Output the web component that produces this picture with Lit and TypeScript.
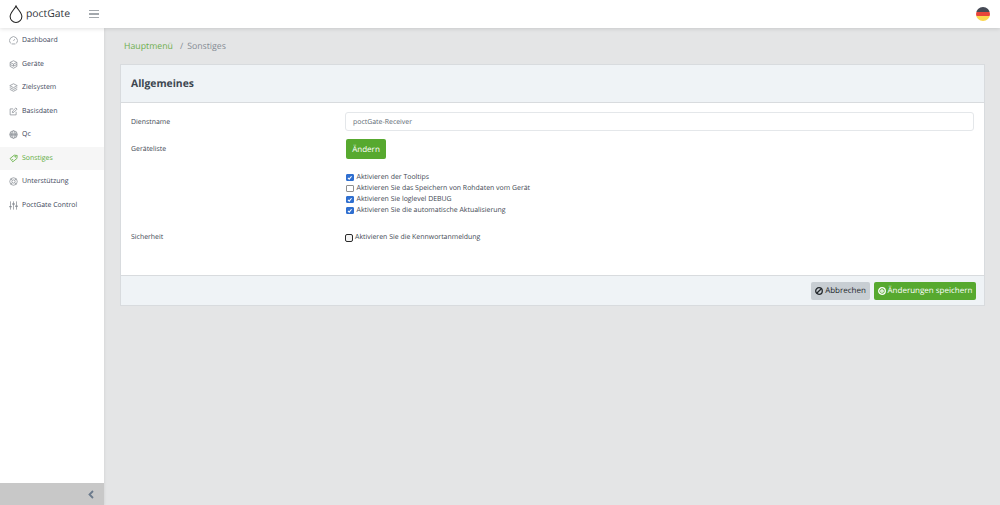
import { LitElement, html, css, svg } from "lit";
import { customElement } from "lit/decorators.js";

const icons: Record<string, any> = {
  dash: svg`<path d="M2.2 9.9A5.3 5.3 0 1 1 9.8 9.9"/><path d="M6 6.5 7.6 4.2"/><path d="M3.5 10.6h5"/>`,
  dev: svg`<path d="M6 1 10.5 3.2 10.5 8.5 6 11 1.5 8.5 1.5 3.2Z"/><path d="M1.5 3.2 6 5.5 10.5 3.2M1.5 6 6 8.2 10.5 6M6 5.5V8.2"/>`,
  layers: svg`<path d="M6 1 11 3.6 6 6.2 1 3.6Z"/><path d="M1 6 6 8.6 11 6"/><path d="M1 8.4 6 11 11 8.4"/>`,
  edit: svg`<path d="M9.5 6.5V10.5H1.5V2.5H5.5"/><path d="M4.5 7.5 5 5.3 9.2 1.2 10.8 2.8 6.6 7Z"/>`,
  globe: svg`<circle cx="6" cy="6" r="5"/><path d="M1.2 4.3h9.6M1.2 7.7h9.6M1 6h10"/><ellipse cx="6" cy="6" rx="2.3" ry="5"/>`,
  tag: svg`<path d="M1.5 6.5 6.5 1.5H10.5V5.5L5.5 10.5Z" transform="rotate(6 6 6)"/><circle cx="8.4" cy="3.6" r=".7"/><path d="M4 6.5 5.5 8"/>`,
  support: svg`<circle cx="6" cy="6" r="5"/><circle cx="6" cy="6" r="2.2"/><path d="M2.5 2.5 4.4 4.4M9.5 2.5 7.6 4.4M2.5 9.5 4.4 7.6M9.5 9.5 7.6 7.6"/>`,
  sliders: svg`<path d="M2 .5v11M6 .5v11M10 .5v11"/><path stroke-width="1.8" d="M.4 7.5h3.2M4.4 4h3.2M8.4 7h3.2"/>`,
};

const nav = [
  ["dash", "Dashboard"],
  ["dev", "Geräte"],
  ["layers", "Zielsystem"],
  ["edit", "Basisdaten"],
  ["globe", "Qc"],
  ["tag", "Sonstiges"],
  ["support", "Unterstützung"],
  ["sliders", "PoctGate Control"],
];

const checks: [string, boolean][] = [
  ["Aktivieren der Tooltips", true],
  ["Aktivieren Sie das Speichern von Rohdaten vom Gerät", false],
  ["Aktivieren Sie loglevel DEBUG", true],
  ["Aktivieren Sie die automatische Aktualisierung", true],
];

@customElement("app-root")
export class AppRoot extends LitElement {
  static styles = css`
    :host { display: block; height: 505px; overflow: hidden; font-family: "Open Sans", "Noto Sans", sans-serif; text-rendering: geometricPrecision; font-size: 6.95px; color: #3c4650; background: #e4e5e6; }
    .shell { height: 505px; display: flex; flex-direction: column; }
    header { height: 28px; flex: none; background: #fff; display: flex; align-items: center; box-shadow: 0 1px 4px rgba(0,0,0,.12); position: relative; z-index: 2; }
    .logo { width: 14px; height: 18px; margin: 0 0 0 9px; }
    .brand { font-size: 10.4px; color: #2f3338; margin-left: 3px; width: 63px; }
    .burger { width: 10px; display: flex; flex-direction: column; gap: 2px; }
    .burger i { display: block; height: 1.4px; background: #a3a8ad; }
    .flag { margin-left: auto; margin-right: 10px; width: 14px; height: 14px; border-radius: 50%; overflow: hidden; display: flex; flex-direction: column; }
    .flag i { flex: 1; display: block; }
    .main { flex: 1; display: flex; min-height: 0; }
    aside { width: 104px; flex: none; background: #fff; display: flex; flex-direction: column; box-shadow: 1px 0 2px rgba(0,0,0,.06); }
    .items { flex: 1; padding-top: 1px; }
    .item { height: 23.5px; display: flex; align-items: center; gap: 4px; padding-left: 9px; color: #3a3f58; font-size: 6.95px; }
    .item svg { width: 9px; height: 9px; fill: none; stroke: #8a8f96; stroke-width: 1; flex: none; }
    .item.active { background: #f6f6f6; color: #5aab36; }
    .item.active svg { stroke: #5aab36; }
    .collapse { height: 22px; flex: none; background: #c8c8c8; display: flex; justify-content: flex-end; align-items: center; padding-right: 10px; }
    .collapse svg { width: 6px; height: 9px; fill: none; stroke: #6b7a8c; stroke-width: 1.8; }
    .content { flex: 1; padding: 0 15px 0 16px; min-width: 0; }
    .crumb { height: 36px; display: flex; align-items: center; padding-left: 4px; font-size: 8.75px; color: #858c94; }
    .crumb a { color: #6cae4b; }
    .crumb span { margin: 0 4px 0 7px; }
    .card { background: #fff; border: 1px solid #d8dbde; display: flex; flex-direction: column; }
    .card-head { height: 37px; background: #eff3f6; border-bottom: 1px solid #d8dbde; display: flex; align-items: center; padding-left: 10px; font-size: 10.35px; font-weight: 700; color: #3c4650; }
    .card-body { height: 172px; padding: 9px 10px 0; box-sizing: border-box; }
    .row { display: grid; grid-template-columns: 214px 1fr; align-items: start; }
    .label { font-size: 6.95px; color: #3c4650; }
    .label.name { line-height: 21px; }
    .input { height: 19px; border: 1px solid #e4e7ea; border-radius: 3px; box-sizing: border-box; display: flex; align-items: center; padding: 1px 0 0 7px; font-size: 6.95px; color: #5c6873; background: #fff; }
    .row.list { margin-top: 6px; }
    .row.list .label { line-height: 22px; }
    .btn { display: inline-flex; align-items: center; justify-content: center; border-radius: 2px; font-size: 8.05px; color: #fff; background: #57a92f; white-space: nowrap; }
    .change { width: 40px; height: 20px; margin-left: 1px; }
    .checks { margin-top: 11px; margin-left: 215px; display: flex; flex-direction: column; }
    .check { height: 11px; display: flex; align-items: center; gap: 3px; font-size: 6.95px; color: #3c4650; }
    .box { width: 5.5px; height: 5.5px; flex: none; border-radius: 1px; border: 1px solid #8f8f8f; background: #fff; display: flex; }
    .box.on { background: #2f6fd0; border-color: #2f6fd0; }
    .box svg { width: 5.5px; height: 5.5px; fill: none; stroke: #fff; stroke-width: 1.4; }
    .row.sec { margin-top: 16px; align-items: center; }
    .check.sec-check { gap: 2px; }
    .box.focus { width: 6px; height: 6px; border: 1.5px solid #2a2a2a; border-radius: 2px; background: #f4f4f4; }
    .card-foot { height: 30px; box-sizing: border-box; background: #eff3f6; border-top: 1px solid #d8dbde; display: flex; justify-content: flex-end; align-items: center; gap: 4px; padding-right: 8px; }
    .foot-btn { height: 18px; gap: 2px; font-size: 8px; }
    .foot-btn svg { width: 8px; height: 8px; fill: none; stroke: currentColor; stroke-width: 1.3; }
    .cancel { width: 59px; background: #c8ced3; color: #23282c; }
    .save { width: 102px; }
  `;

  render() {
    return html`<div class="shell">
      <header>
        <svg class="logo" viewBox="0 0 14 19" fill="none" stroke="#222" stroke-width="1.1"><path d="M7 1C5.5 4.5 .8 8 .8 12.2a6.2 6.2 0 0 0 12.4 0C13.2 8 8.5 4.5 7 1Z"/></svg>
        <div class="brand">poctGate</div>
        <div class="burger"><i></i><i></i><i></i></div>
        <div class="flag"><i style="background:#454a55"></i><i style="background:#e8443a"></i><i style="background:#fbd64e"></i></div>
      </header>
      <div class="main">
        <aside>
          <div class="items">
            ${nav.map(([ic, t]) => html`<div class="item ${t === "Sonstiges" ? "active" : ""}"><svg viewBox="0 0 12 12">${icons[ic]}</svg>${t}</div>`)}
          </div>
          <div class="collapse"><svg viewBox="0 0 6 9"><path d="M5 1 1.5 4.5 5 8"/></svg></div>
        </aside>
        <div class="content">
          <div class="crumb"><a>Hauptmenü</a><span>/</span>Sonstiges</div>
          <div class="card">
            <div class="card-head">Allgemeines</div>
            <div class="card-body">
              <div class="row"><div class="label name">Dienstname</div><div class="input">poctGate-Receiver</div></div>
              <div class="row list"><div class="label">Geräteliste</div><div class="btn change">Ändern</div></div>
              <div class="checks">
                ${checks.map(([t, on]) => html`<div class="check"><span class="box ${on ? "on" : ""}">${on ? html`<svg viewBox="0 0 7 7"><path d="M1.2 3.6 2.8 5.2 5.8 1.6"/></svg>` : ""}</span>${t}</div>`)}
              </div>
              <div class="row sec"><div class="label">Sicherheit</div><div class="check sec-check"><span class="box focus"></span>Aktivieren Sie die Kennwortanmeldung</div></div>
            </div>
            <div class="card-foot">
              <div class="btn foot-btn cancel"><svg viewBox="0 0 8 8"><circle cx="4" cy="4" r="3.3"/><path d="M1.7 6.3 6.3 1.7"/></svg>Abbrechen</div>
              <div class="btn foot-btn save"><svg viewBox="0 0 8 8"><circle cx="4" cy="4" r="3.3"/><circle cx="4" cy="4" r="1.2"/></svg>Änderungen speichern</div>
            </div>
          </div>
        </div>
      </div>
    </div>`;
  }
}
